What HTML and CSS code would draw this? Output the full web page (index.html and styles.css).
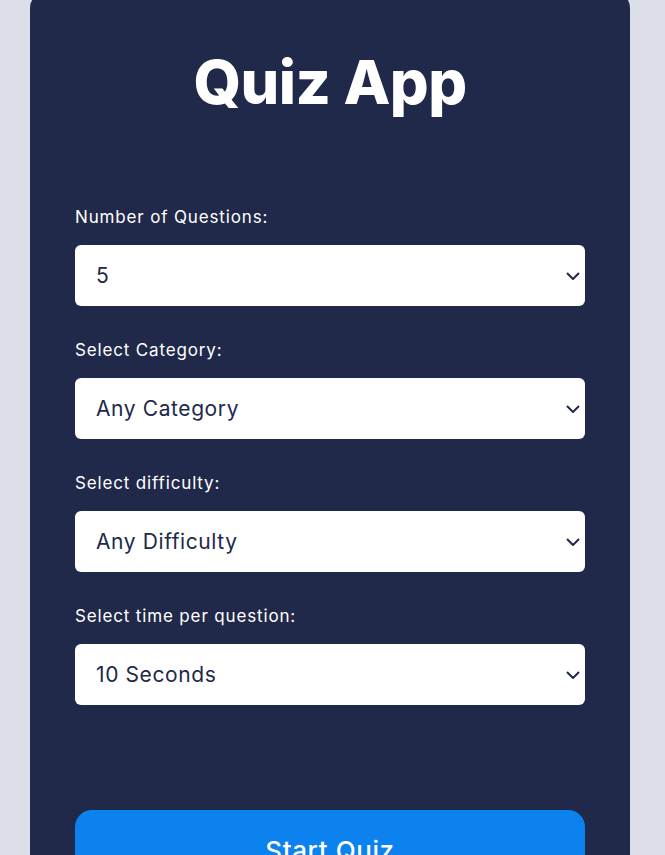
FILE: index.html
```html
<!DOCTYPE html>
<html lang="en">
<head>
<meta charset="utf-8">
<title>Quiz App</title>
<link rel="stylesheet" href="styles.css">
</head>
<body>
<main class="card">
  <h1 class="title">Quiz App</h1>
  <form class="form">
    <div class="field">
      <label class="label" for="num">Number of Questions:</label>
      <select class="select" id="num"><option>5</option><option>10</option><option>15</option></select>
    </div>
    <div class="field">
      <label class="label" for="cat">Select Category:</label>
      <select class="select" id="cat"><option>Any Category</option></select>
    </div>
    <div class="field">
      <label class="label" for="diff">Select difficulty:</label>
      <select class="select" id="diff"><option>Any Difficulty</option><option>Easy</option><option>Medium</option><option>Hard</option></select>
    </div>
    <div class="field">
      <label class="label" for="time">Select time per question:</label>
      <select class="select" id="time"><option>10 Seconds</option><option>20 Seconds</option></select>
    </div>
    <button type="button" class="start">Start Quiz</button>
  </form>
</main>
</body>
</html>
```
FILE: styles.css
```css
* { box-sizing: border-box; }
html, body { margin: 0; padding: 0; }
body {
  background: #dcdee9;
  font-family: "Inter", "Noto Sans", sans-serif;
  overflow: hidden;
}
.card {
  width: 600px;
  margin: -8px 0 0 30px;
  background: #20294a;
  border-radius: 16px;
  padding: 54px 45px 60px;
}
.title {
  margin: 0;
  color: #ffffff;
  font-size: 61px;
  line-height: 72px;
  font-weight: 800;
  text-align: center;
  letter-spacing: -0.5px;
}
.form {
  display: flex;
  flex-direction: column;
  gap: 32px;
  margin-top: 87px;
}
.field {
  display: flex;
  flex-direction: column;
  gap: 16px;
}
.label {
  color: #ffffff;
  font-size: 17px;
  line-height: 24px;
  letter-spacing: 0.85px;
}
.select {
  appearance: none;
  -webkit-appearance: none;
  height: 61px;
  width: 100%;
  border: none;
  border-radius: 6px;
  background-color: #ffffff;
  background-image: url("data:image/svg+xml;utf8,<svg xmlns='http://www.w3.org/2000/svg' width='14' height='8' viewBox='0 0 14 8'><path d='M1 1l6 6 6-6' fill='none' stroke='%2320294a' stroke-width='2'/></svg>");
  background-repeat: no-repeat;
  background-position: right 5px center;
  padding: 0 30px 0 21px;
  font-family: inherit;
  font-size: 21px;
  letter-spacing: 0.6px;
  color: #20294a;
}
.start {
  margin-top: 73px;
  height: 80px;
  border: none;
  border-radius: 17px;
  background: #0b82ee;
  color: #ffffff;
  font-family: inherit;
  font-size: 26px;
  letter-spacing: 0.6px;
  font-weight: 500;
}
```
